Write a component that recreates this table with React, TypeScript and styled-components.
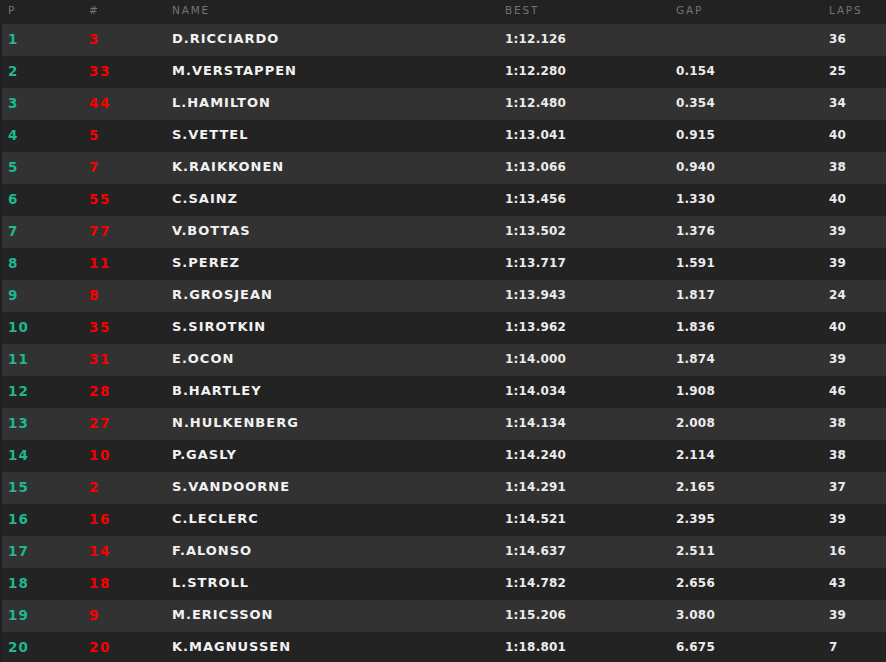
import React from "react";
import styled, { createGlobalStyle } from "styled-components";

interface Result {
  pos: number;
  car: number;
  name: string;
  best: string;
  gap: string;
  laps: number;
}

const results: Result[] = [
  { pos: 1, car: 3, name: "D.RICCIARDO", best: "1:12.126", gap: "", laps: 36 },
  { pos: 2, car: 33, name: "M.VERSTAPPEN", best: "1:12.280", gap: "0.154", laps: 25 },
  { pos: 3, car: 44, name: "L.HAMILTON", best: "1:12.480", gap: "0.354", laps: 34 },
  { pos: 4, car: 5, name: "S.VETTEL", best: "1:13.041", gap: "0.915", laps: 40 },
  { pos: 5, car: 7, name: "K.RAIKKONEN", best: "1:13.066", gap: "0.940", laps: 38 },
  { pos: 6, car: 55, name: "C.SAINZ", best: "1:13.456", gap: "1.330", laps: 40 },
  { pos: 7, car: 77, name: "V.BOTTAS", best: "1:13.502", gap: "1.376", laps: 39 },
  { pos: 8, car: 11, name: "S.PEREZ", best: "1:13.717", gap: "1.591", laps: 39 },
  { pos: 9, car: 8, name: "R.GROSJEAN", best: "1:13.943", gap: "1.817", laps: 24 },
  { pos: 10, car: 35, name: "S.SIROTKIN", best: "1:13.962", gap: "1.836", laps: 40 },
  { pos: 11, car: 31, name: "E.OCON", best: "1:14.000", gap: "1.874", laps: 39 },
  { pos: 12, car: 28, name: "B.HARTLEY", best: "1:14.034", gap: "1.908", laps: 46 },
  { pos: 13, car: 27, name: "N.HULKENBERG", best: "1:14.134", gap: "2.008", laps: 38 },
  { pos: 14, car: 10, name: "P.GASLY", best: "1:14.240", gap: "2.114", laps: 38 },
  { pos: 15, car: 2, name: "S.VANDOORNE", best: "1:14.291", gap: "2.165", laps: 37 },
  { pos: 16, car: 16, name: "C.LECLERC", best: "1:14.521", gap: "2.395", laps: 39 },
  { pos: 17, car: 14, name: "F.ALONSO", best: "1:14.637", gap: "2.511", laps: 16 },
  { pos: 18, car: 18, name: "L.STROLL", best: "1:14.782", gap: "2.656", laps: 43 },
  { pos: 19, car: 9, name: "M.ERICSSON", best: "1:15.206", gap: "3.080", laps: 39 },
  { pos: 20, car: 20, name: "K.MAGNUSSEN", best: "1:18.801", gap: "6.675", laps: 7 },
];

const GlobalStyle = createGlobalStyle`
  html, body {
    margin: 0;
    padding: 0;
    background: #1f1f1f;
    overflow: hidden;
  }
`;

const Board = styled.div`
  width: 886px;
  height: 662px;
  background: #1f1f1f;
  font-family: "DejaVu Sans", Verdana, sans-serif;
  padding-left: 2px;
  box-sizing: border-box;
`;

const columns = "81px 83px 333px 171px 153px 1fr";

const HeaderRow = styled.div`
  display: grid;
  grid-template-columns: ${columns};
  align-items: center;
  height: 24px;
  background: #222;
  margin-left: -2px;
  padding-left: 8px;
  padding-bottom: 5px;
  box-sizing: border-box;
`;

const HeadCell = styled.div`
  color: #747474;
  font-size: 10.5px;
  letter-spacing: 1.8px;
  font-family: "DejaVu Sans", sans-serif;
`;

const Row = styled.div<{ $odd: boolean }>`
  display: grid;
  grid-template-columns: ${columns};
  align-items: center;
  height: 32px;
  padding-left: 6px;
  padding-bottom: 3px;
  box-sizing: border-box;
  background: ${(p) => (p.$odd ? "#323232" : "#232323")};
`;

const Pos = styled.div`
  color: #1cb890;
  font-weight: bold;
  font-size: 13.5px;
  letter-spacing: 1px;
`;

const Car = styled.div`
  color: #f80000;
  font-weight: bold;
  font-size: 13.5px;
  letter-spacing: 1.5px;
`;

const Name = styled.div`
  color: #f2f2f2;
  font-weight: bold;
  font-size: 13px;
  letter-spacing: 1px;
`;

const Num = styled.div`
  color: #ececec;
  font-weight: bold;
  font-size: 12px;
  letter-spacing: 0.2px;
`;

export default function App() {
  return (
    <Board>
      <GlobalStyle />
      <HeaderRow>
        <HeadCell>P</HeadCell>
        <HeadCell>#</HeadCell>
        <HeadCell>NAME</HeadCell>
        <HeadCell>BEST</HeadCell>
        <HeadCell>GAP</HeadCell>
        <HeadCell>LAPS</HeadCell>
      </HeaderRow>
      {results.map((r) => (
        <Row key={r.pos} $odd={r.pos % 2 === 1}>
          <Pos>{r.pos}</Pos>
          <Car>{r.car}</Car>
          <Name>{r.name}</Name>
          <Num>{r.best}</Num>
          <Num>{r.gap}</Num>
          <Num>{r.laps}</Num>
        </Row>
      ))}
    </Board>
  );
}
